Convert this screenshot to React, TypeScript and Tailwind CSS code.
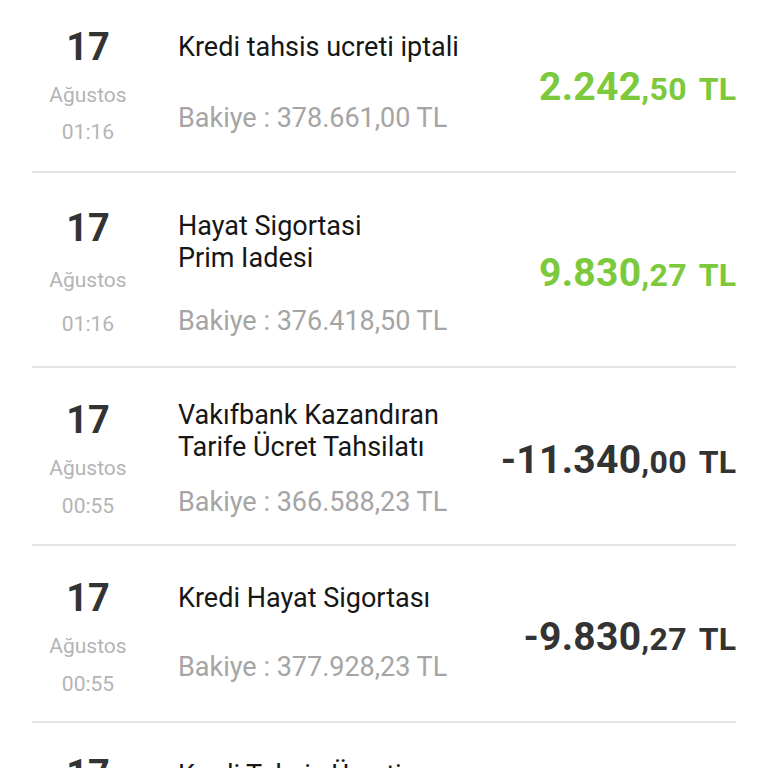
type Row = {
  time: string;
  title: string[];
  balance: string;
  main: string;
  cents: string;
  positive: boolean;
  row: string;
  left: string;
  ag: string;
  tm: string;
  mid: string;
  bal: string;
};

const rows: Row[] = [
  { time: "01:16", title: ["Kredi tahsis ucreti iptali"], balance: "378.661,00 TL", main: "2.242", cents: ",50", positive: true, row: "h-[178px] -mt-[5px]", left: "pt-[29px]", ag: "mt-[11px]", tm: "mt-[9px]", mid: "pt-[36px]", bal: "mt-[39px]" },
  { time: "01:16", title: ["Hayat Sigortasi", "Prim Iadesi"], balance: "376.418,50 TL", main: "9.830", cents: ",27", positive: true, row: "h-[195px]", left: "pt-[32px]", ag: "mt-[15px]", tm: "mt-[16px]", mid: "pt-[37px]", bal: "mt-[31px]" },
  { time: "00:55", title: ["Vakıfbank Kazandıran", "Tarife Ücret Tahsilatı"], balance: "366.588,23 TL", main: "-11.340", cents: ",00", positive: false, row: "h-[178px]", left: "pt-[29px]", ag: "mt-[11px]", tm: "mt-[10px]", mid: "pt-[31px]", bal: "mt-[23px]" },
  { time: "00:55", title: ["Kredi Hayat Sigortası"], balance: "377.928,23 TL", main: "-9.830", cents: ",27", positive: false, row: "h-[177px]", left: "pt-[29px]", ag: "mt-[11px]", tm: "mt-[10px]", mid: "pt-[36px]", bal: "mt-[37px]" },
  { time: "00:55", title: ["Kredi Tahsis Ücreti"], balance: "375.000,00 TL", main: "-2.242", cents: ",50", positive: false, row: "h-[178px]", left: "pt-[28px]", ag: "mt-[11px]", tm: "mt-[10px]", mid: "pt-[36px]", bal: "mt-[37px]" },
];

export default function App() {
  return (
    <div className="h-[768px] w-[768px] overflow-hidden bg-white font-['Roboto',sans-serif]">
      <div className="mx-[32px]">
        {rows.map((r, i) => (
          <div key={i} className={`${r.row} flex items-center border-b-2 border-[#e4e4e4]`}>
            <div className={`flex w-[112px] flex-col items-center self-stretch ${r.left}`}>
              <div className="text-[38px] font-bold leading-[46px] text-[#333]">17</div>
              <div className={`${r.ag} text-[21px] leading-[28px] text-[#b4b4b4]`}>Ağustos</div>
              <div className={`${r.tm} text-[21px] leading-[28px] text-[#b4b4b4]`}>{r.time}</div>
            </div>
            <div className={`ml-[34px] flex flex-1 flex-col self-stretch ${r.mid}`}>
              {r.title.map((t, j) => (
                <div key={j} className="whitespace-nowrap text-[27px] leading-[32px] text-[#161616]">{t}</div>
              ))}
              <div className={`${r.bal} whitespace-nowrap text-[27px] leading-[32px] text-[#a5a5a5]`}>Bakiye : {r.balance}</div>
            </div>
            <div className={`flex items-baseline whitespace-nowrap pt-[8px] font-bold ${r.positive ? "text-[#7cc93b]" : "text-[#333]"}`}>
              <span className="text-[39px] tracking-[0.3px]">{r.main}</span>
              <span className="text-[32px] tracking-[0.3px]">{r.cents}</span>
              <span className="ml-[12px] text-[32px]">TL</span>
            </div>
          </div>
        ))}
      </div>
    </div>
  );
}
